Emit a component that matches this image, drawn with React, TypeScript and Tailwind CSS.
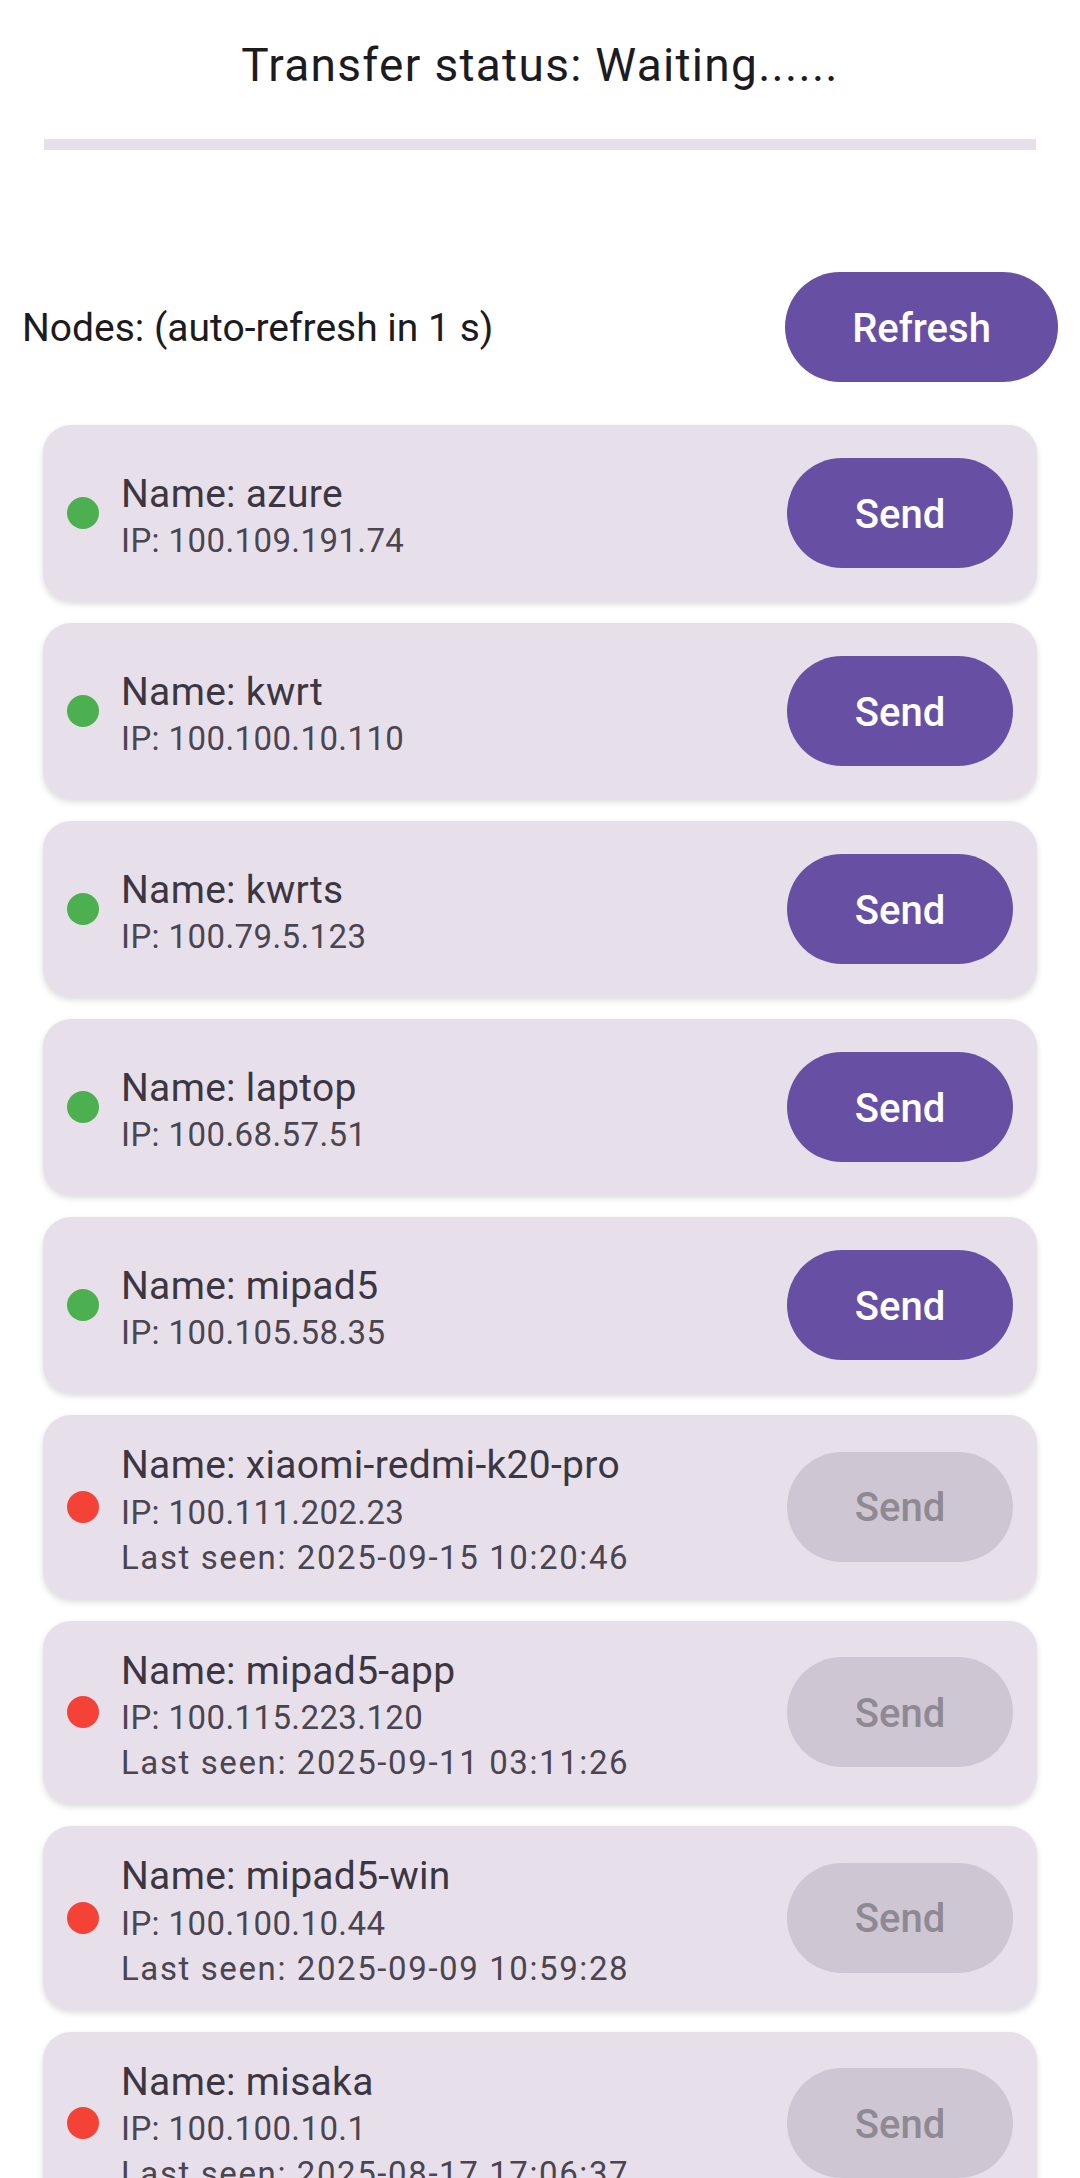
import React from 'react';

type Node = {
  name: string;
  ip: string;
  online: boolean;
  lastSeen?: string;
};

const NODES: Node[] = [
  { name: 'azure', ip: '100.109.191.74', online: true },
  { name: 'kwrt', ip: '100.100.10.110', online: true },
  { name: 'kwrts', ip: '100.79.5.123', online: true },
  { name: 'laptop', ip: '100.68.57.51', online: true },
  { name: 'mipad5', ip: '100.105.58.35', online: true },
  { name: 'xiaomi-redmi-k20-pro', ip: '100.111.202.23', online: false, lastSeen: '2025-09-15 10:20:46' },
  { name: 'mipad5-app', ip: '100.115.223.120', online: false, lastSeen: '2025-09-11 03:11:26' },
  { name: 'mipad5-win', ip: '100.100.10.44', online: false, lastSeen: '2025-09-09 10:59:28' },
  { name: 'misaka', ip: '100.100.10.1', online: false, lastSeen: '2025-08-17 17:06:37' },
];

const NodeCard: React.FC<{ node: Node }> = ({ node }) => {
  return (
    <div className="flex items-center min-h-[176px] py-[19px] pl-[24px] pr-[24px] rounded-[28px] bg-[#e7e0eb] shadow-[0_3px_6px_rgba(0,0,0,0.14)]">
      <div
        className={
          node.online
            ? 'w-[32px] h-[32px] rounded-full bg-[#4caf50] shrink-0'
            : 'w-[32px] h-[32px] rounded-full bg-[#f44336] shrink-0'
        }
      />
      <div className="flex-1 pl-[22px] pt-[7px] min-w-0">
        <div className="text-[39px] leading-[48.5px] tracking-[0.3px] text-[#3b3641]">Name: {node.name}</div>
        <div className="text-[33px] leading-[45px] tracking-[0.4px] text-[#4a4550]">IP: {node.ip}</div>
        {node.lastSeen && (
          <div className="text-[33px] leading-[45px] tracking-[1.6px] text-[#4a4550]">Last seen: {node.lastSeen}</div>
        )}
      </div>
      <button
        className={
          node.online
            ? 'w-[226px] h-[110px] pt-[3px] rounded-full bg-[#6750a4] text-white text-[40px] font-medium shrink-0'
            : 'w-[226px] h-[110px] pt-[3px] rounded-full bg-[#cec7d3] text-[#8e8993] text-[40px] font-medium shrink-0'
        }
      >
        Send
      </button>
    </div>
  );
};

const App: React.FC = () => {
  return (
    <div className="min-h-screen bg-white font-['Roboto',sans-serif] overflow-hidden">
      {/* Status */}
      <h1 className="pt-[42px] text-center text-[46px] leading-[46px] tracking-[1.3px] text-[#1c1b1f] font-normal">
        Transfer status: Waiting......
      </h1>
      <div className="mt-[51px] mx-[44px] h-[11px] bg-[#e6e0ea]" />

      {/* Header row */}
      <div className="mt-[122px] px-[22px] flex items-center justify-between">
        <span className="text-[39px] text-[#1c1b1f] pt-[3px]">Nodes: (auto-refresh in 1 s)</span>
        <button className="w-[273px] h-[110px] pt-[3px] rounded-full bg-[#6750a4] text-white text-[40px] font-medium">
          Refresh
        </button>
      </div>

      {/* Node list */}
      <div className="mt-[43px] mx-[43px] flex flex-col gap-[22px] pb-[40px]">
        {NODES.map(n => (
          <NodeCard key={n.name} node={n} />
        ))}
      </div>
    </div>
  );
};

export default App;
